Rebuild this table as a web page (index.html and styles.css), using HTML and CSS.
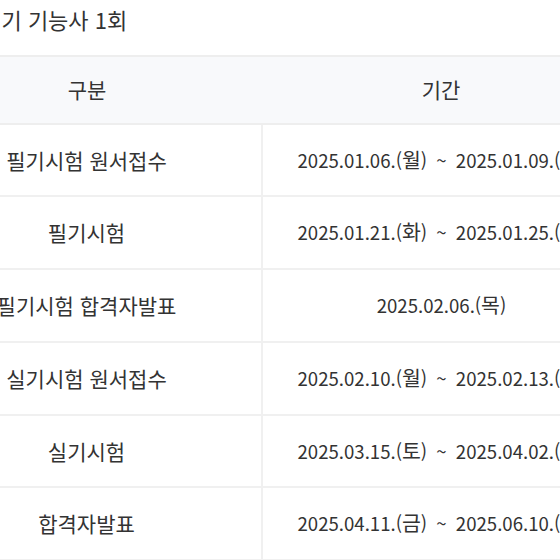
FILE: index.html
```html
<!DOCTYPE html>
<html lang="ko">
<head>
  <meta charset="UTF-8">
  <title>기능사 시험일정</title>
  <link rel="stylesheet" href="styles.css">
</head>
<body>
  <div class="schedule">
    <h3 class="schedule-title">2025년 정기 기능사 1회</h3>
    <table class="schedule-table">
      <colgroup>
        <col class="col-type">
        <col>
      </colgroup>
      <thead>
        <tr>
          <th>구분</th>
          <th>기간</th>
        </tr>
      </thead>
      <tbody>
        <tr>
          <td>필기시험 원서접수</td>
          <td class="date">2025.01.06.(<span class="day">월</span>) ~ 2025.01.09.(<span class="day">목</span>)</td>
        </tr>
        <tr>
          <td>필기시험</td>
          <td class="date">2025.01.21.(<span class="day">화</span>) ~ 2025.01.25.(<span class="day">토</span>)</td>
        </tr>
        <tr>
          <td>필기시험 합격자발표</td>
          <td class="date">2025.02.06.(<span class="day">목</span>)</td>
        </tr>
        <tr>
          <td>실기시험 원서접수</td>
          <td class="date">2025.02.10.(<span class="day">월</span>) ~ 2025.02.13.(<span class="day">목</span>)</td>
        </tr>
        <tr>
          <td>실기시험</td>
          <td class="date">2025.03.15.(<span class="day">토</span>) ~ 2025.04.02.(<span class="day">수</span>)</td>
        </tr>
        <tr>
          <td>합격자발표</td>
          <td class="date">2025.04.11.(<span class="day">금</span>) ~ 2025.06.10.(<span class="day">화</span>)</td>
        </tr>
      </tbody>
    </table>
  </div>
</body>
</html>
```

FILE: styles.css
```css
body {
  margin: 0;
  background: #fff;
  font-family: "Noto Sans CJK KR", "Noto Sans", sans-serif;
  color: #333;
  overflow: hidden;
}

.schedule {
  width: 708px;
  margin-left: -88px;
}

.schedule-title {
  margin: 0;
  padding: 4px 0 0 0;
  height: 55px;
  box-sizing: border-box;
  font-size: 22px;
  font-weight: normal;
  line-height: 30px;
  text-indent: -6px;
  color: #333;
}

.schedule-table {
  width: 100%;
  border-collapse: collapse;
  table-layout: fixed;
  font-size: 21px;
}

.col-type {
  width: 350px;
}

.schedule-table th,
.schedule-table td {
  text-align: center;
  font-weight: normal;
  line-height: 26.7px;
  white-space: nowrap;
}

.schedule-table th {
  background: #f8f9fb;
  border-top: 2px solid #eeeeee;
  border-bottom: 2px solid #eeeeee;
  padding: 19px 0 20px;
}

.schedule-table td {
  padding: 22px 0;
  border-bottom: 2px solid #f0f0f0;
}

.schedule-table td + td {
  border-left: 2px solid #f0f0f0;
}

.schedule-table .date {
  font-size: 18.6px;
  word-spacing: 4px;
}

.day {
  font-size: 20.5px;
  line-height: 0;
}
```
